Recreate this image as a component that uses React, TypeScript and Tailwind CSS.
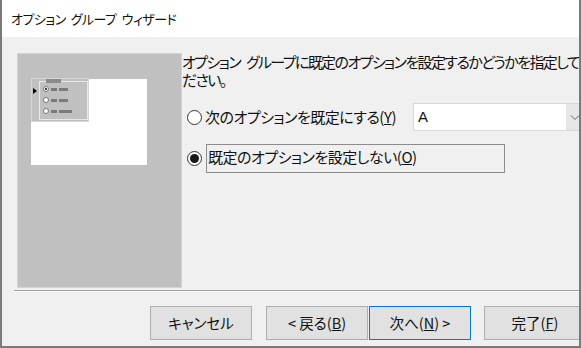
import React from "react";

const jp = "font-['Noto_Sans_CJK_JP','Noto_Sans',sans-serif] [font-feature-settings:'palt']";

function Sp({ w }: { w: string }) {
  return <span className={`inline-block ${w}`} />;
}

function Radio({ checked }: { checked?: boolean }) {
  return (
    <span className="flex h-[15px] w-[15px] shrink-0 items-center justify-center rounded-full border border-[#333] bg-white">
      {checked && <span className="h-[9px] w-[9px] rounded-full bg-[#1a1a1a]" />}
    </span>
  );
}

function Btn({ children, primary, className = "" }: { children: React.ReactNode; primary?: boolean; className?: string }) {
  return (
    <div
      className={`flex h-[34px] w-[102px] shrink-0 items-center justify-center whitespace-nowrap border bg-[#e1e1e1] text-[14.5px] text-[#111] ${
        primary ? "border-[#0078d7]" : "border-[#adadad]"
      } ${className}`}
    >
      {children}
    </div>
  );
}

function Preview() {
  return (
    <div className="ml-[15px] mt-[16px] h-[235px] w-[165px] shrink-0 border border-[#d4d4d4] bg-[#c0c0c0] pl-[13px] pt-[25px]">
      <div className="relative h-[86px] w-[116px] bg-white">
        {/* mini option group */}
        <div className="absolute left-0 top-[-1px] h-[44px] w-[58px] border border-[#d6d6d6] bg-[#c0c0c0]">
          <div className="absolute left-[1px] top-[9px] h-0 w-0 border-y-[3px] border-l-[4px] border-y-transparent border-l-black" />
          <div className="absolute left-[7px] top-[2px] h-[39px] w-[49px] border border-[#e8e8e8]">
            <div className="absolute left-[6px] top-[-3px] h-[4px] w-[15px] bg-[#8a8a8a]" />
            {[8, 19, 30].map((t, i) => (
              <div key={t} className="absolute left-[3px] flex items-center gap-[2px]" style={{ top: t - 4 }}>
                <span className="flex h-[6px] w-[6px] items-center justify-center rounded-full border border-[#777] bg-white">
                  {i === 0 && <span className="h-[2px] w-[2px] rounded-full bg-black" />}
                </span>
                <span className="h-[3px] w-[6px] bg-[#7a7a7a]" />
                <span className={`h-[3px] bg-[#7a7a7a] ${i === 2 ? "w-[13px]" : "w-[9px]"}`} />
              </div>
            ))}
          </div>
        </div>
      </div>
    </div>
  );
}

export default function App() {
  return (
    <div className={`relative h-[348px] w-[581px] overflow-hidden border-x-2 border-b-2 border-[#7a7a7a] bg-[#f0f0f0] ${jp}`}>
      {/* title bar */}
      <div className="flex h-[37px] items-center whitespace-nowrap bg-white pl-[9px] text-[13px] tracking-[-0.5px] text-[#111]">
        オプション<Sp w="w-[5px]" />グループ<Sp w="w-[5px]" />ウィザード
      </div>

      <div className="flex h-[253px]">
        <Preview />
        <div className="flex min-w-0 flex-1 flex-col pt-[16px] text-[15px] text-[#111]">
          <div className="w-[500px] whitespace-nowrap leading-[18px] tracking-[-1.6px]">
            オプション<Sp w="w-[6px]" />グループに既定のオプションを設定するかどうかを指定してく
            <br />
            ださい。
          </div>

          <div className="mt-[14px] flex items-center">
            <div className="ml-[5px] flex w-[226px] shrink-0 items-center gap-[3px] whitespace-nowrap tracking-[-0.5px]">
              <Radio />
              <span>
                次のオプションを既定にする(<span className="underline underline-offset-1">Y</span>)
              </span>
            </div>
            <div className="flex h-[28px] w-[172px] shrink-0 items-center border border-[#d9d9d9] bg-white">
              <span className="flex-1 pl-[4px] text-[15px] font-['Liberation_Sans',sans-serif]">A</span>
              <span className="flex h-full w-[18px] items-start justify-center bg-[#e6e6e6] pt-[8px]">
                <svg width="10" height="10" viewBox="0 0 10 10" fill="none" stroke="#666" strokeWidth="1">
                  <path d="M1 3.5 L5 7.5 L9 3.5" />
                </svg>
              </span>
            </div>
          </div>

          <div className="mt-[13px] flex items-center">
            <div className="ml-[5px]">
              <Radio checked />
            </div>
            <div className="ml-[4px] flex h-[29px] w-[299px] items-start whitespace-nowrap border border-[#8c8c8c] pl-[1px] pt-[1px] tracking-[-0.5px]">
              既定のオプションを設定しない(<span className="underline underline-offset-1">O</span>)
            </div>
          </div>
        </div>
      </div>

      {/* separator */}
      <div className="ml-[12px] border-t border-b border-t-[#a0a0a0] border-b-white" />

      <div className="mt-[14px] flex pl-[148px]">
        <Btn>キャンセル</Btn>
        <Btn className="ml-[14px]">
          &lt; 戻る(<span className="underline underline-offset-1">B</span>)
        </Btn>
        <Btn primary className="ml-[1px]">
          次へ(<span className="underline underline-offset-1">N</span>) &gt;
        </Btn>
        <Btn className="ml-[13px]">
          完了(<span className="underline underline-offset-1">F</span>)
        </Btn>
      </div>
    </div>
  );
}
